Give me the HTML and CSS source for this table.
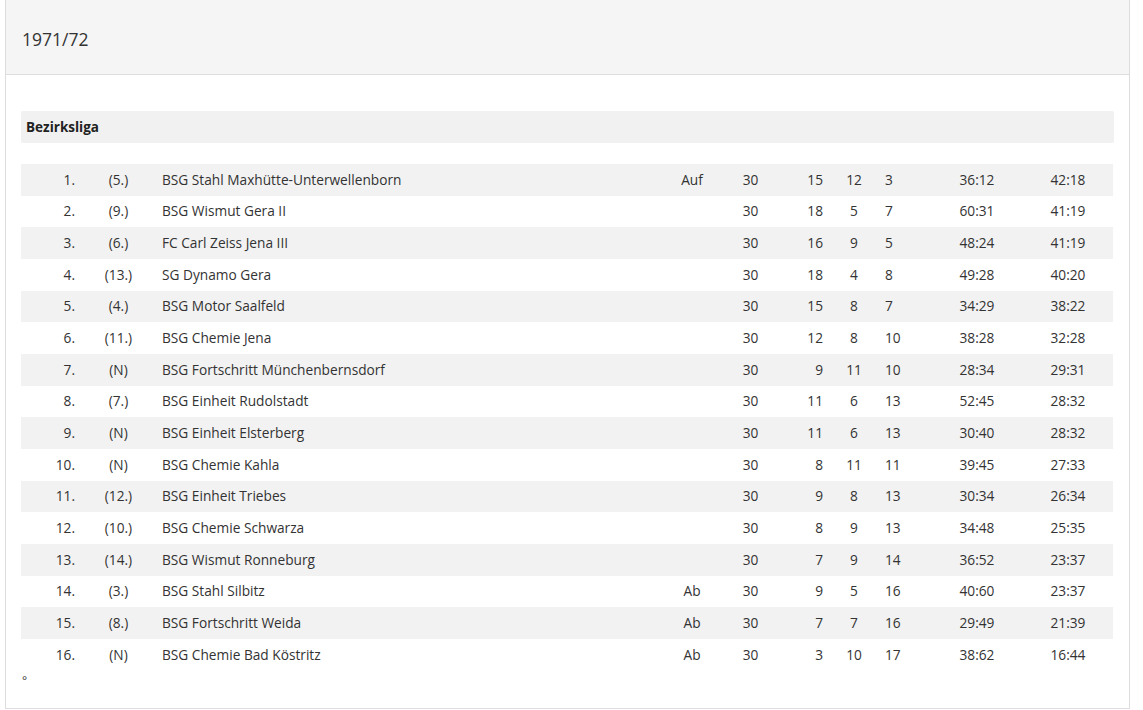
FILE: index.html
```html
<!DOCTYPE html>
<html lang="de">
<head>
<meta charset="utf-8">
<title>1971/72</title>
<link rel="stylesheet" href="styles.css">
</head>
<body>
<div class="panel">
  <div class="panel-heading">1971/72</div>
  <div class="panel-body">
    <div class="league">Bezirksliga</div>
    <table class="standings">
      <colgroup>
        <col class="c-rank"><col class="c-prev"><col class="c-team"><col class="c-note"><col class="c-sp"><col class="c-w"><col class="c-d"><col class="c-l"><col class="c-goals"><col class="c-pts">
      </colgroup>
      <tbody>
        <tr><td class="rank">1.</td><td class="prev">(5.)</td><td class="team">BSG Stahl Maxhütte-Unterwellenborn</td><td class="note">Auf</td><td class="sp">30</td><td class="w">15</td><td class="d">12</td><td class="l">3</td><td class="goals">36:12</td><td class="pts">42:18</td></tr>
        <tr><td class="rank">2.</td><td class="prev">(9.)</td><td class="team">BSG Wismut Gera II</td><td class="note"></td><td class="sp">30</td><td class="w">18</td><td class="d">5</td><td class="l">7</td><td class="goals">60:31</td><td class="pts">41:19</td></tr>
        <tr><td class="rank">3.</td><td class="prev">(6.)</td><td class="team">FC Carl Zeiss Jena III</td><td class="note"></td><td class="sp">30</td><td class="w">16</td><td class="d">9</td><td class="l">5</td><td class="goals">48:24</td><td class="pts">41:19</td></tr>
        <tr><td class="rank">4.</td><td class="prev">(13.)</td><td class="team">SG Dynamo Gera</td><td class="note"></td><td class="sp">30</td><td class="w">18</td><td class="d">4</td><td class="l">8</td><td class="goals">49:28</td><td class="pts">40:20</td></tr>
        <tr><td class="rank">5.</td><td class="prev">(4.)</td><td class="team">BSG Motor Saalfeld</td><td class="note"></td><td class="sp">30</td><td class="w">15</td><td class="d">8</td><td class="l">7</td><td class="goals">34:29</td><td class="pts">38:22</td></tr>
        <tr><td class="rank">6.</td><td class="prev">(11.)</td><td class="team">BSG Chemie Jena</td><td class="note"></td><td class="sp">30</td><td class="w">12</td><td class="d">8</td><td class="l">10</td><td class="goals">38:28</td><td class="pts">32:28</td></tr>
        <tr><td class="rank">7.</td><td class="prev">(N)</td><td class="team">BSG Fortschritt Münchenbernsdorf</td><td class="note"></td><td class="sp">30</td><td class="w">9</td><td class="d">11</td><td class="l">10</td><td class="goals">28:34</td><td class="pts">29:31</td></tr>
        <tr><td class="rank">8.</td><td class="prev">(7.)</td><td class="team">BSG Einheit Rudolstadt</td><td class="note"></td><td class="sp">30</td><td class="w">11</td><td class="d">6</td><td class="l">13</td><td class="goals">52:45</td><td class="pts">28:32</td></tr>
        <tr><td class="rank">9.</td><td class="prev">(N)</td><td class="team">BSG Einheit Elsterberg</td><td class="note"></td><td class="sp">30</td><td class="w">11</td><td class="d">6</td><td class="l">13</td><td class="goals">30:40</td><td class="pts">28:32</td></tr>
        <tr><td class="rank">10.</td><td class="prev">(N)</td><td class="team">BSG Chemie Kahla</td><td class="note"></td><td class="sp">30</td><td class="w">8</td><td class="d">11</td><td class="l">11</td><td class="goals">39:45</td><td class="pts">27:33</td></tr>
        <tr><td class="rank">11.</td><td class="prev">(12.)</td><td class="team">BSG Einheit Triebes</td><td class="note"></td><td class="sp">30</td><td class="w">9</td><td class="d">8</td><td class="l">13</td><td class="goals">30:34</td><td class="pts">26:34</td></tr>
        <tr><td class="rank">12.</td><td class="prev">(10.)</td><td class="team">BSG Chemie Schwarza</td><td class="note"></td><td class="sp">30</td><td class="w">8</td><td class="d">9</td><td class="l">13</td><td class="goals">34:48</td><td class="pts">25:35</td></tr>
        <tr><td class="rank">13.</td><td class="prev">(14.)</td><td class="team">BSG Wismut Ronneburg</td><td class="note"></td><td class="sp">30</td><td class="w">7</td><td class="d">9</td><td class="l">14</td><td class="goals">36:52</td><td class="pts">23:37</td></tr>
        <tr><td class="rank">14.</td><td class="prev">(3.)</td><td class="team">BSG Stahl Silbitz</td><td class="note">Ab</td><td class="sp">30</td><td class="w">9</td><td class="d">5</td><td class="l">16</td><td class="goals">40:60</td><td class="pts">23:37</td></tr>
        <tr><td class="rank">15.</td><td class="prev">(8.)</td><td class="team">BSG Fortschritt Weida</td><td class="note">Ab</td><td class="sp">30</td><td class="w">7</td><td class="d">7</td><td class="l">16</td><td class="goals">29:49</td><td class="pts">21:39</td></tr>
        <tr><td class="rank">16.</td><td class="prev">(N)</td><td class="team">BSG Chemie Bad Köstritz</td><td class="note">Ab</td><td class="sp">30</td><td class="w">3</td><td class="d">10</td><td class="l">17</td><td class="goals">38:62</td><td class="pts">16:44</td></tr>
      </tbody>
    </table>
    <div class="footnote">°</div>
  </div>
</div>
</body>
</html>
```

FILE: styles.css
```css
html, body {
  margin: 0;
  padding: 0;
  background: #ffffff;
}

body {
  font-family: "Open Sans", "Noto Sans", "DejaVu Sans", sans-serif;
  font-size: 13.7px;
  color: #333333;
  padding: 0 13px 0 5px;
}

.panel {
  border: 1px solid #dddddd;
  border-top: none;
  background: #ffffff;
}

.panel-heading {
  background: #f5f5f5;
  border-bottom: 1px solid #dddddd;
  height: 75px;
  box-sizing: border-box;
  padding: 27px 16px 0 16px;
  font-size: 17.5px;
  line-height: 24px;
  color: #333333;
}

.panel-body {
  padding: 36px 15px 13px 15px;
}

.league {
  background: #f1f1f1;
  height: 32px;
  line-height: 32px;
  padding: 0 5px;
  font-weight: 700;
  font-size: 13.5px;
  color: #222222;
  border-radius: 2px;
}

.standings {
  margin-top: 21px;
  width: 1092px;
  border-collapse: collapse;
  table-layout: fixed;
}

.standings tr:nth-child(odd) td {
  background: #f2f2f2;
}

.standings td {
  height: 31.67px;
  padding: 0 5px;
  line-height: 20px;
  white-space: nowrap;
}

.c-rank { width: 59px; }
.c-prev { width: 77px; }
.c-team { width: 505px; }
.c-note { width: 60px; }
.c-sp { width: 57px; }
.c-w { width: 49px; }
.c-d { width: 52px; }
.c-l { width: 65px; }
.c-goals { width: 64px; }
.c-pts { width: 104px; }

.rank { text-align: right; }
.prev { text-align: center; }
.team { text-align: left; }
.note { text-align: center; }
.sp { text-align: center; }
.standings .w { text-align: right; }
.d { text-align: center; }
.l { text-align: left; }
.goals { text-align: center; }
.standings .pts { text-align: center; padding-left: 19px; }

.footnote {
  padding: 2px 1px 0;
  line-height: 16px;
  height: 22px;
  font-size: 12px;
}
```
